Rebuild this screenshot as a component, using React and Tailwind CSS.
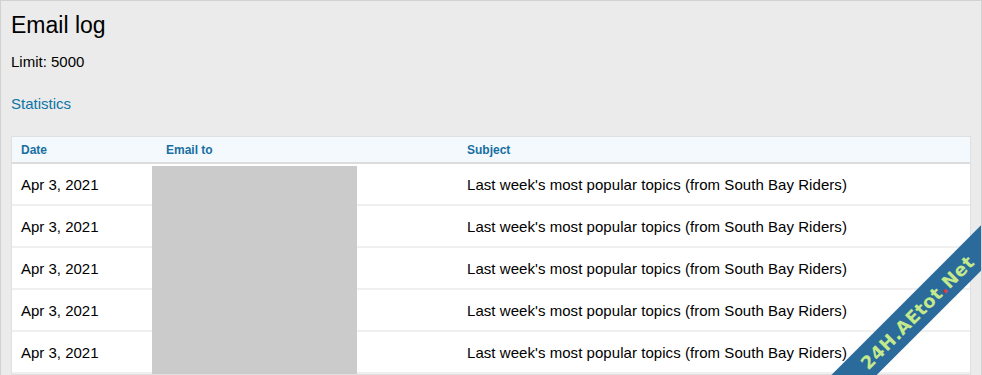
import React from "react";

const rows = Array.from({ length: 5 }, () => ({
  date: "Apr 3, 2021",
  subject: "Last week's most popular topics (from South Bay Riders)",
}));

const App = () => {
  return (
    <div
      className="relative h-[375px] w-[982px] overflow-hidden border border-b-0 border-[#d2d2d2] bg-[#ebebeb] px-[10px] pt-[10px] text-black"
      style={{ fontFamily: '"Liberation Sans", Arial, sans-serif' }}
    >
      <h1 className="text-[23px] leading-[28px]">Email log</h1>
      <p className="mt-[13px] text-[15px] leading-[20px]">Limit: 5000</p>
      <a href="#" className="mt-[22px] block text-[15px] leading-[20px] text-[#0b74a6]">
        Statistics
      </a>

      {/* Log table */}
      <div className="relative mt-[22px] border border-[#e0e0e0] bg-white">
        <div className="flex h-[27px] items-center border-b-2 border-[#dcdcdc] bg-[#f4f9fd] text-[12px] font-bold text-[#176fa3]">
          <div className="w-[145px] pl-[9px]">Date</div>
          <div className="w-[301px] pl-[9px]">Email to</div>
          <div className="flex-1 pl-[9px]">Subject</div>
        </div>
        {rows.map((row, i) => (
          <div key={i} className="flex h-[42px] items-center border-b-2 border-[#efefef] pt-[2px] text-[15px]">
            <div className="w-[145px] pl-[9px]">{row.date}</div>
            <div className="w-[301px]" />
            <div className="flex-1 pl-[9px] tracking-[0.05px]">{row.subject}</div>
          </div>
        ))}
        {/* redacted addresses */}
        <div className="absolute left-[140px] top-[29px] bottom-0 w-[205px] bg-[#cbcbcb]" />
      </div>

      {/* watermark */}
      <div className="absolute left-[756px] top-[295px] flex h-[32px] w-[320px] -rotate-[45deg] items-center justify-center bg-[#2a6b9b]">
        <span
          className="text-[18px] font-bold tracking-[0.5px] text-[#c4e98c]"
          style={{ fontFamily: '"DejaVu Sans", sans-serif' }}
        >
          24H.AEtot<span className="text-[#e23a3a]">.</span>Net
        </span>
      </div>
    </div>
  );
};

export default App;
